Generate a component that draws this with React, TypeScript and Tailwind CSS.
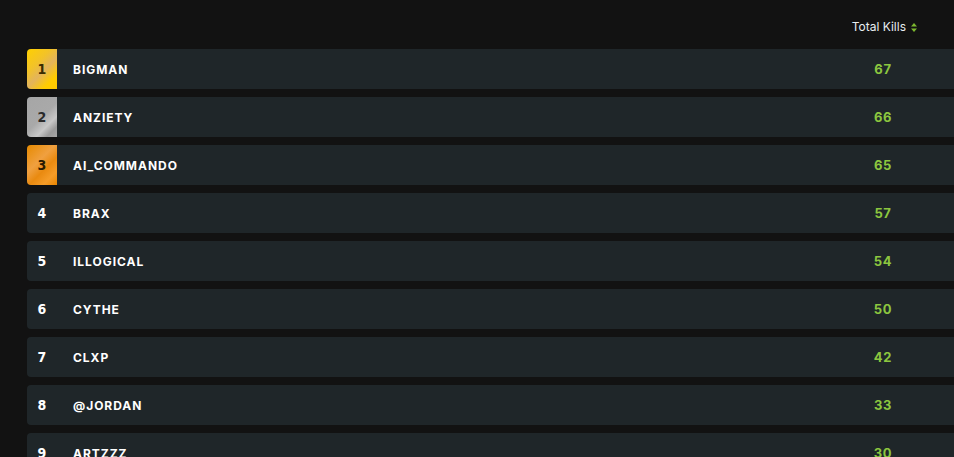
import React from "react";

const players = [
  { name: "BIGMAN", kills: 67 },
  { name: "ANZIETY", kills: 66 },
  { name: "AI_COMMANDO", kills: 65 },
  { name: "BRAX", kills: 57 },
  { name: "ILLOGICAL", kills: 54 },
  { name: "CYTHE", kills: 50 },
  { name: "CLXP", kills: 42 },
  { name: "@JORDAN", kills: 33 },
  { name: "ARTZZZ", kills: 30 },
];

const badge = [
  "bg-[linear-gradient(135deg,#ffd000_0%,#f2c22a_35%,#e3b45c_55%,#ffcc00_80%,#ffc800_100%)] text-[#3a2b00]",
  "bg-[linear-gradient(135deg,#a6a6a6_0%,#a9a9a9_50%,#c8c8c8_70%,#9a9a9a_85%,#a8a8a8_100%)] text-[#2a2a2a]",
  "bg-[linear-gradient(135deg,#e68a00_0%,#f0a040_40%,#e98a10_60%,#f59c28_80%,#e88500_100%)] text-[#2a1a00]",
];

const SortIcon = () => (
  <svg width="6" height="9" viewBox="0 0 6 9" className="ml-[5px]">
    <path d="M3 0 L6 3.5 H0 Z" fill="#7cb82f" />
    <path d="M3 9 L6 5.5 H0 Z" fill="#7cb82f" />
  </svg>
);

const App = () => {
  return (
    <div className="h-[457px] w-[954px] overflow-hidden bg-[#121212] font-['Inter',sans-serif]">
      <div className="flex h-[49px] items-end justify-end pb-[14px] pr-[37px]">
        <span className="flex h-[16px] items-center text-[12px] text-[#e8edf0]">
          Total Kills
          <SortIcon />
        </span>
      </div>
      <div className="flex flex-col gap-[8px] pl-[27px]">
        {players.map((p, i) => (
          <div
            key={p.name}
            className="flex h-[40px] w-[960px] shrink-0 items-center overflow-hidden rounded-[4px] bg-[#1f2629] pt-[2px]"
          >
            <div
              className={`-mt-[2px] flex h-[40px] w-[30px] items-center justify-center font-['DejaVu_Sans_Condensed',sans-serif] text-[14px] font-bold ${
                i < 3 ? badge[i] : "text-white"
              }`}
            >
              {i + 1}
            </div>
            <div className="ml-[16px] w-[798px] text-[12px] font-bold tracking-[0.08em] text-white">
              {p.name}
            </div>
            <div className="w-[24px] text-center text-[13px] font-bold tracking-[0.05em] text-[#8cc63f]">
              {p.kills}
            </div>
          </div>
        ))}
      </div>
    </div>
  );
};

export default App;
